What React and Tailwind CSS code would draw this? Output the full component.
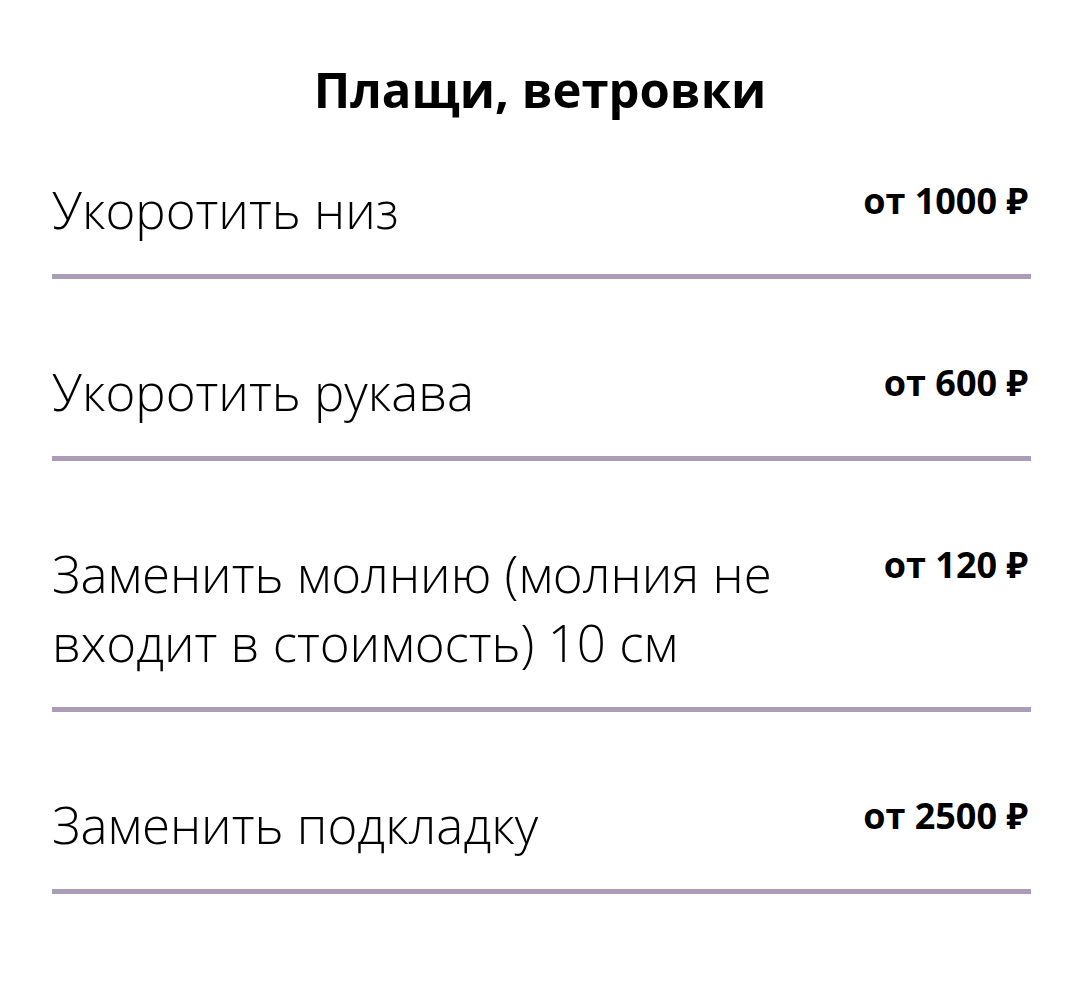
const ITEMS = [
  { name: 'Укоротить низ', price: 'от 1000 ₽' },
  { name: 'Укоротить рукава', price: 'от 600 ₽' },
  { name: 'Заменить молнию (молния не входит в стоимость) 10 см', price: 'от 120 ₽' },
  { name: 'Заменить подкладку', price: 'от 2500 ₽' },
];

export default function App() {
  return (
    <div className="min-h-screen bg-white px-[52px] pt-[55px] text-black" style={{ fontFamily: '"Open Sans", "Noto Sans", sans-serif' }}>
      <h1 className="text-center text-[49px] font-bold leading-[68px]">Плащи, ветровки</h1>
      <ul className="mt-[52px] w-[979px]">
        {ITEMS.map((it) => (
          <li key={it.name} className="mb-[78px] flex items-start justify-between border-b-[5px] border-[#ab9cb8] pb-[30px]">
            <span className="w-[770px] text-[51px] font-light leading-[69px]">{it.name}</span>
            <span className="pt-[4px] pr-[3px] text-[36px] font-bold leading-[44px] whitespace-nowrap">{it.price}</span>
          </li>
        ))}
      </ul>
    </div>
  );
}
